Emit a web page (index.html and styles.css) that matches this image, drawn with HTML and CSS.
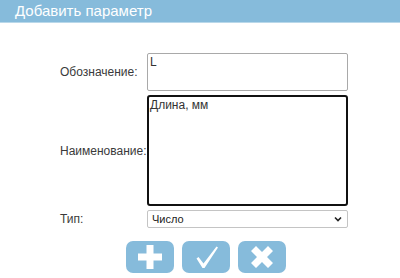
FILE: index.html
```html
<!DOCTYPE html>
<html lang="ru">

<head>
	<meta charset="UTF-8">
	<title>Добавить параметр</title>
	<link rel="stylesheet" href="styles.css">
</head>

<body>

	<div class="dialog">

		<div class="title">Добавить параметр</div>

		<div class="content">
			<div class="form">
				<label for="code">Обозначение:</label>
				<textarea id="code" class="code">L</textarea>

				<label for="name">Наименование:</label>
				<textarea id="name" class="name">Длина, мм</textarea>

				<label for="type">Тип:</label>
				<div class="select">
					<span>Число</span>
					<svg width="8" height="6" viewBox="0 0 8 6"><path d="M1 1.5 L4 4.5 L7 1.5" fill="none" stroke="#222" stroke-width="1.6"/></svg>
				</div>
			</div>

			<div class="buttons">
				<button class="btn" title="Добавить">
					<svg width="28" height="28" viewBox="0 0 28 28"><path d="M10.5 2h7v8.5H26v7h-8.5V26h-7v-8.5H2v-7h8.5z" fill="#fff"/></svg>
				</button>
				<button class="btn" title="Сохранить">
					<svg width="28" height="28" viewBox="0 0 28 28"><path d="M4.5 15.5 L6.5 14 L11.5 20.5 L24.5 3.5 L26 4.5 L12.5 25 L10.5 25 z" fill="#fff"/></svg>
				</button>
				<button class="btn" title="Отмена">
					<svg width="28" height="28" viewBox="0 0 28 28"><path d="M3 8 L8 3 L14 9 L20 3 L25 8 L19 14 L25 20 L20 25 L14 19 L8 25 L3 20 L9 14 z" fill="#fff"/></svg>
				</button>
			</div>
		</div>

	</div>

</body>

</html>
```

FILE: styles.css
```css
* {
	box-sizing: border-box;
}

body {
	margin: 0;
	font-family: "Liberation Sans", Arial, sans-serif;
	background: #fff;
}

.title {
	height: 23px;
	padding-left: 15px;
	background: #86bbdb;
	border-bottom: 1px solid #b9d8ea;
	color: #fff;
	font-size: 15px;
	line-height: 22px;
}

.content {
	padding-top: 30px;
}

.form {
	display: grid;
	grid-template-columns: 87px 201px;
	row-gap: 4px;
	margin-left: 60px;
	align-items: center;
}

label {
	font-size: 12px;
	color: #3a3a3a;
}

textarea {
	display: block;
	width: 201px;
	margin: 0;
	padding: 1px 2px;
	font-family: "Liberation Sans", Arial, sans-serif;
	font-size: 12px;
	color: #333;
	resize: none;
	outline: none;
}

.code {
	height: 38px;
	border: 1px solid #a9a9a9;
	border-radius: 2px;
}

.name {
	height: 111px;
	border: 2px solid #111;
	border-radius: 3px;
	padding: 1px;
}

.select {
	display: flex;
	justify-content: space-between;
	align-items: center;
	height: 18px;
	padding: 0 5px 0 4px;
	border: 1px solid #c4c4c4;
	border-radius: 2px;
	font-size: 11px;
	color: #222;
}

.buttons {
	display: flex;
	justify-content: center;
	gap: 8px;
	margin-top: 13px;
	padding-left: 11px;
}

.btn {
	display: flex;
	align-items: center;
	justify-content: center;
	width: 48px;
	height: 32px;
	padding: 0;
	border: none;
	border-radius: 7px;
	background: #86bbdb;
}
```
